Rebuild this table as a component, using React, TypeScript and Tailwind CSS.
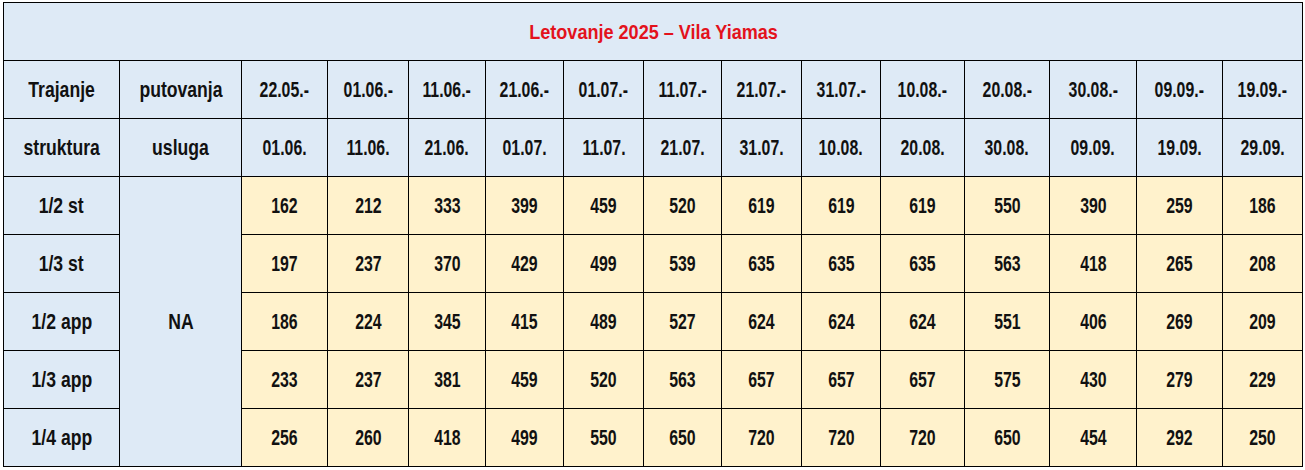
import React from 'react';

const FROM = ['22.05.-', '01.06.-', '11.06.-', '21.06.-', '01.07.-', '11.07.-', '21.07.-', '31.07.-', '10.08.-', '20.08.-', '30.08.-', '09.09.-', '19.09.-'];
const TO = ['01.06.', '11.06.', '21.06.', '01.07.', '11.07.', '21.07.', '31.07.', '10.08.', '20.08.', '30.08.', '09.09.', '19.09.', '29.09.'];
const WIDTHS = [116, 122, 86, 81, 77, 78, 80, 78, 80, 79, 84, 85, 87, 86, 80];

const ROWS: { name: string; prices: number[] }[] = [
  { name: '1/2 st', prices: [162, 212, 333, 399, 459, 520, 619, 619, 619, 550, 390, 259, 186] },
  { name: '1/3 st', prices: [197, 237, 370, 429, 499, 539, 635, 635, 635, 563, 418, 265, 208] },
  { name: '1/2 app', prices: [186, 224, 345, 415, 489, 527, 624, 624, 624, 551, 406, 269, 209] },
  { name: '1/3 app', prices: [233, 237, 381, 459, 520, 563, 657, 657, 657, 575, 430, 279, 229] },
  { name: '1/4 app', prices: [256, 260, 418, 499, 550, 650, 720, 720, 720, 650, 454, 292, 250] },
];

const cell = 'border border-black text-center align-middle h-[58px] p-0 whitespace-nowrap';
const blue = 'bg-[#deeaf6]';
const cream = 'bg-[#fff2cc]';

// condensed look: the reference font is a narrow grotesk
const Num = ({ children }: { children: React.ReactNode }) => (
  <span className="inline-block scale-x-[0.72]">{children}</span>
);
const Word = ({ children }: { children: React.ReactNode }) => (
  <span className="inline-block scale-x-[0.8]">{children}</span>
);

export default function App() {
  return (
    <div className="w-[1305px] h-[470px] bg-white pt-[2px] pl-[3px]">
      <table
        className="table-fixed border-collapse text-[#111] text-[22px] font-bold leading-none"
        style={{ width: 1299, fontFamily: '"Liberation Sans", Arial, sans-serif' }}
      >
        <colgroup>
          {WIDTHS.map((w, i) => (
            <col key={i} style={{ width: w }} />
          ))}
        </colgroup>
        <tbody>
          <tr>
            <td colSpan={15} className={`${cell} ${blue} text-[21px] text-[#e3121c]`}>
              <span className="inline-block scale-x-[0.86]">Letovanje 2025 – Vila Yiamas</span>
            </td>
          </tr>
          <tr>
            <td className={`${cell} ${blue}`}><Word>Trajanje</Word></td>
            <td className={`${cell} ${blue}`}><Word>putovanja</Word></td>
            {FROM.map((d) => (
              <td key={d} className={`${cell} ${blue}`}><Num>{d}</Num></td>
            ))}
          </tr>
          <tr>
            <td className={`${cell} ${blue}`}><Word>struktura</Word></td>
            <td className={`${cell} ${blue}`}><Word>usluga</Word></td>
            {TO.map((d) => (
              <td key={d} className={`${cell} ${blue}`}><Num>{d}</Num></td>
            ))}
          </tr>
          {ROWS.map((row, r) => (
            <tr key={row.name}>
              <td className={`${cell} ${blue}`}><Word>{row.name}</Word></td>
              {r === 0 && (
                <td rowSpan={5} className={`${cell} ${blue}`}><Word>NA</Word></td>
              )}
              {row.prices.map((p, i) => (
                <td key={i} className={`${cell} ${cream}`}><Num>{p}</Num></td>
              ))}
            </tr>
          ))}
        </tbody>
      </table>
    </div>
  );
}
